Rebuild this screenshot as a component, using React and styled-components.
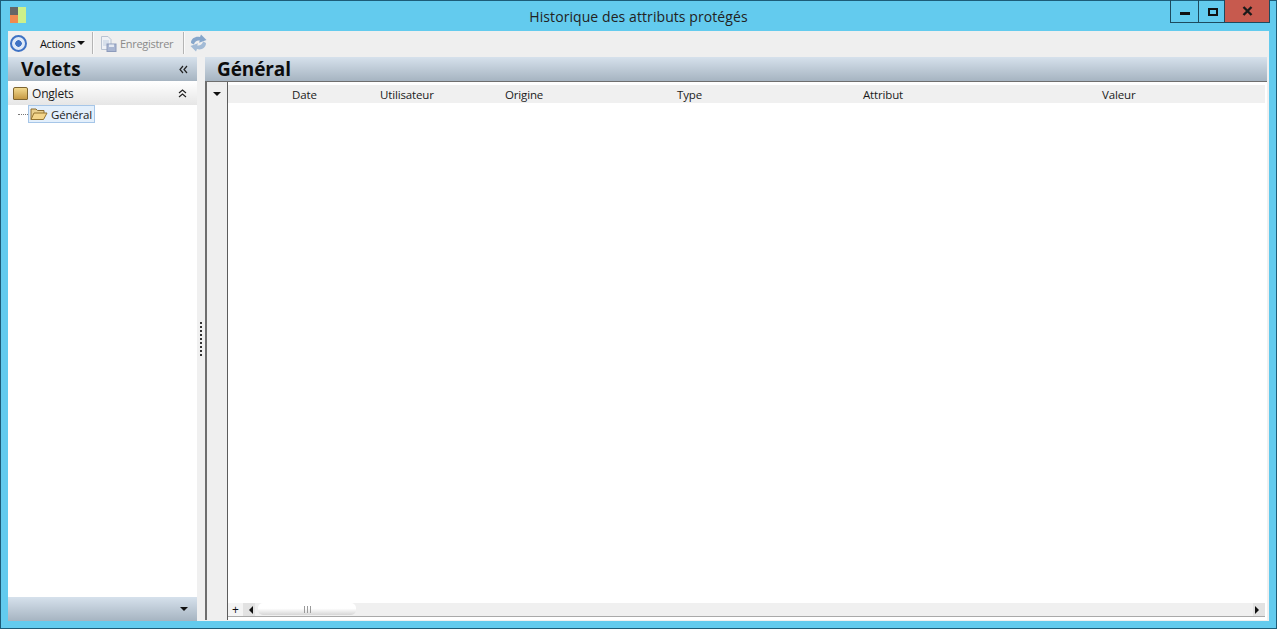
import React from "react";
import styled, { createGlobalStyle } from "styled-components";

const columns = [
  { label: "Date", width: 88 },
  { label: "Utilisateur", width: 125 },
  { label: "Origine", width: 172 },
  { label: "Type", width: 186 },
  { label: "Attribut", width: 239 },
  { label: "Valeur", width: 160 },
];

const App = () => {
  return (
    <>
      <GlobalStyle />
      <Window>
        <TitleBar>
          <AppLogo>
            <LogoCell color="#666666" />
            <LogoCell color="#cdf08a" tall />
            <LogoCell color="#f08a50" />
          </AppLogo>
          <WindowTitle>Historique des attributs protégés</WindowTitle>
          <WindowControls>
            <ControlButton $width={28}>
              <MinimizeGlyph />
            </ControlButton>
            <ControlButton $width={26}>
              <MaximizeGlyph />
            </ControlButton>
            <CloseButton>
              <svg width="11" height="10" viewBox="0 0 11 10">
                <path d="M1.5 1 L9.5 9 M9.5 1 L1.5 9" stroke="#1a1a1a" strokeWidth="2.4" />
              </svg>
            </CloseButton>
          </WindowControls>
        </TitleBar>
        <Client>
          <Toolbar>
            <TargetIcon />
            <ActionsMenu>
              Actions
              <Caret />
            </ActionsMenu>
            <ToolSeparator />
            <SaveButton>
              <svg width="17" height="17" viewBox="0 0 17 17">
                <path d="M1.5 1.5 H8 L11 4.5 V14.5 H1.5 Z" fill="#eef1f6" stroke="#b9c3d2" />
                <path d="M3 6 H9 M3 8 H9 M3 10 H7" stroke="#bfcde0" />
                <rect x="7" y="9" width="9" height="7.5" fill="#a9b6d2" stroke="#8d9bbb" />
                <rect x="9" y="9.5" width="5" height="2.5" fill="#e4e9f2" />
              </svg>
              Enregistrer
            </SaveButton>
            <ToolSeparator />
            <RefreshIcon>
              <svg width="17" height="18" viewBox="0 0 17 18">
                <path d="M1 9 C1 4 6 2 10 3 L11 0.5 L16.5 6 L9 8.8 L9.8 6.6 C7 6 5 7.5 3.8 10.5 Z" fill="#86a6cb" />
                <path d="M16 9 C16 14 11 16.5 7 15 L6 17.5 L0.5 12 L8 9.2 L7.2 11.4 C10 12 12 10.5 13.2 7.5 Z" fill="#a3bbd6" />
              </svg>
            </RefreshIcon>
          </Toolbar>
          <Body>
            <SidePanel>
              <PanelHeader>
                <PanelTitle>Volets</PanelTitle>
                <CollapseGlyph>
                  <svg width="9" height="9" viewBox="0 0 9 9" fill="none" stroke="#222" strokeWidth="1.2">
                    <path d="M4 1 L1 4.5 L4 8 M8 1 L5 4.5 L8 8" />
                  </svg>
                </CollapseGlyph>
              </PanelHeader>
              <GroupRow>
                <ClosedFolder />
                <GroupLabel>Onglets</GroupLabel>
                <GroupToggle>
                  <svg width="9" height="9" viewBox="0 0 9 9" fill="none" stroke="#222" strokeWidth="1.2">
                    <path d="M1 4 L4.5 1 L8 4 M1 8 L4.5 5 L8 8" />
                  </svg>
                </GroupToggle>
              </GroupRow>
              <TreeArea>
                <TreeRow>
                  <TreeDots />
                  <TreeItem>
                    <svg width="18" height="14" viewBox="0 0 18 14">
                      <path d="M1 12.5 V2 H6 L7.5 3.5 H14 V6" fill="#e9cf8d" stroke="#8a6d33" />
                      <path d="M1 12.5 L4 6 H17 L13.5 12.5 Z" fill="#f3d58a" stroke="#94742f" />
                    </svg>
                    <span>Général</span>
                  </TreeItem>
                </TreeRow>
              </TreeArea>
              <PanelFooter>
                <Caret />
              </PanelFooter>
            </SidePanel>
            <Splitter>
              <Grip />
            </Splitter>
            <MainPanel>
              <PanelHeader>
                <MainTitle>Général</MainTitle>
              </PanelHeader>
              <GridFrame>
                <RowHeaderStrip>
                  <StripTop>
                    <Caret />
                  </StripTop>
                </RowHeaderStrip>
                <GridContent>
                  <ColumnHeader>
                    {columns.map((col) => (
                      <ColumnLabel key={col.label} $width={col.width}>
                        {col.label}
                      </ColumnLabel>
                    ))}
                  </ColumnHeader>
                  <GridRows />
                  <ScrollRow>
                    <AddButton>+</AddButton>
                    <ScrollArrow $align="flex-end">
                      <ArrowLeft />
                    </ScrollArrow>
                    <ScrollTrack>
                      <ScrollThumb>
                        <ThumbGrip />
                      </ScrollThumb>
                    </ScrollTrack>
                    <ScrollArrow $align="flex-start">
                      <ArrowRight />
                    </ScrollArrow>
                  </ScrollRow>
                </GridContent>
              </GridFrame>
            </MainPanel>
          </Body>
        </Client>
      </Window>
    </>
  );
};

const GlobalStyle = createGlobalStyle`
  html, body {
    margin: 0;
    height: 100%;
    overflow: hidden;
  }
  body {
    font-family: "Open Sans", "Liberation Sans", sans-serif;
    color: #1b1b1b;
  }
`;

const Window = styled.div`
  box-sizing: border-box;
  width: 1277px;
  height: 629px;
  background: #63cbee;
  border: 1px solid #1d5c78;
  display: flex;
  flex-direction: column;
  padding: 0 7px 7px;
`;
const TitleBar = styled.div`
  height: 30px;
  flex: none;
  display: flex;
  align-items: flex-start;
  position: relative;
`;
const AppLogo = styled.div`
  display: grid;
  grid-template-columns: 8px 8px;
  grid-template-rows: 8px 8px;
  width: 16px;
  margin: 6px 0 0 2px;
`;
const LogoCell = styled.div`
  background: ${(props) => props.color};
  grid-row: ${(props) => (props.tall ? "1 / span 2" : "auto")};
  grid-column: ${(props) => (props.tall ? "2" : "1")};
`;
const WindowTitle = styled.div`
  position: absolute;
  left: 0;
  right: 0;
  top: 6px;
  text-align: center;
  font-size: 14px;
  line-height: 19px;
  letter-spacing: 0.08px;
  color: #222;
`;
const WindowControls = styled.div`
  position: absolute;
  right: -1px;
  top: -1px;
  display: flex;
  height: 22px;
  border: 1px solid #1d4a5e;
  border-top: none;
`;
const ControlButton = styled.div`
  box-sizing: border-box;
  width: ${(props) => props.$width}px;
  border-right: 1px solid #1d4a5e;
  display: flex;
  align-items: center;
  justify-content: center;
`;
const CloseButton = styled.div`
  width: 44px;
  background: #c75a4e;
  display: flex;
  align-items: center;
  justify-content: center;
`;
const MinimizeGlyph = styled.div`
  width: 10px;
  height: 3px;
  background: #111;
  margin-top: 5px;
`;
const MaximizeGlyph = styled.div`
  box-sizing: border-box;
  width: 10px;
  height: 8px;
  border: 2px solid #111;
  margin: 1px 0 0 2px;
`;
const Client = styled.div`
  flex: 1;
  min-height: 0;
  display: flex;
  flex-direction: column;
  background: #f0f0f0;
`;
const Toolbar = styled.div`
  box-sizing: border-box;
  height: 26px;
  flex: none;
  display: flex;
  align-items: center;
  padding-bottom: 2px;
  background: #efefef;
  font-size: 11px;
`;
const TargetIcon = styled.div`
  box-sizing: border-box;
  width: 17px;
  height: 17px;
  margin-left: 2px;
  border-radius: 50%;
  border: 2px solid #3f72c4;
  background: radial-gradient(circle, #3f72c4 0 3px, #dfe9f7 3.5px);
`;
const ActionsMenu = styled.div`
  display: flex;
  align-items: center;
  gap: 2px;
  margin-left: 13px;
  width: 49px;
  flex: none;
  letter-spacing: -0.35px;
  color: #111;
`;
const Caret = styled.div`
  width: 0;
  height: 0;
  border-left: 4px solid transparent;
  border-right: 4px solid transparent;
  border-top: 4px solid #111;
`;
const ToolSeparator = styled.div`
  width: 1px;
  height: 22px;
  margin-left: 3px;
  background: #b4b4b4;
  box-shadow: 1px 0 0 #fafafa;
`;
const SaveButton = styled.div`
  display: flex;
  align-items: center;
  gap: 3px;
  width: 80px;
  flex: none;
  margin-left: 7px;
  color: #8a8a8a;
  letter-spacing: -0.3px;
`;
const RefreshIcon = styled.div`
  display: flex;
  margin-left: 6px;
`;
const Body = styled.div`
  flex: 1;
  min-height: 0;
  display: flex;
`;
const SidePanel = styled.div`
  width: 189px;
  flex: none;
  display: flex;
  flex-direction: column;
  background: #fff;
`;
const PanelHeader = styled.div`
  height: 24px;
  flex: none;
  display: flex;
  align-items: center;
  justify-content: space-between;
  background: linear-gradient(#d6e1ec, #a6b4c1);
`;
const PanelTitle = styled.div`
  margin-left: 13px;
  font-size: 19px;
  font-weight: 700;
  letter-spacing: 0.15px;
  color: #0c0c0c;
`;
const MainTitle = styled(PanelTitle)`
  margin-left: 12px;
  letter-spacing: -0.1px;
`;
const CollapseGlyph = styled.div`
  display: flex;
  margin-right: 9px;
`;
const GroupRow = styled.div`
  height: 24px;
  flex: none;
  display: flex;
  align-items: center;
  background: linear-gradient(#ffffff, #e6e6e6);
  font-size: 12px;
`;
const ClosedFolder = styled.div`
  width: 13px;
  height: 11px;
  margin-left: 5px;
  border: 1px solid #7d6430;
  border-radius: 2px 2px 1px 1px;
  background: linear-gradient(#f2d98e, #c69a45);
`;
const GroupLabel = styled.div`
  margin-left: 4px;
  flex: 1;
  letter-spacing: -0.2px;
`;
const GroupToggle = styled.div`
  display: flex;
  margin-right: 10px;
`;
const TreeArea = styled.div`
  flex: 1;
  min-height: 0;
`;
const TreeRow = styled.div`
  display: flex;
  align-items: center;
  height: 18px;
`;
const TreeDots = styled.div`
  width: 10px;
  margin-left: 10px;
  border-top: 1px dotted #777;
`;
const TreeItem = styled.div`
  box-sizing: border-box;
  height: 18px;
  width: 67px;
  display: flex;
  align-items: center;
  gap: 3px;
  padding-left: 1px;
  background: #e3effb;
  border: 1px solid #a6c6e8;
  font-size: 11.5px;
  letter-spacing: -0.2px;
`;
const PanelFooter = styled.div`
  height: 24px;
  flex: none;
  display: flex;
  align-items: center;
  justify-content: flex-end;
  padding-right: 9px;
  background: linear-gradient(#d6e1ec, #a6b4c1);
`;
const Splitter = styled.div`
  width: 8px;
  flex: none;
  display: flex;
  align-items: center;
  justify-content: center;
  background: #f0f0f0;
`;
const Grip = styled.div`
  width: 0;
  height: 34px;
  border-left: 2px dotted #333;
`;
const MainPanel = styled.div`
  flex: 1;
  min-width: 0;
  display: flex;
  flex-direction: column;
  margin-right: 2px;
`;
const GridFrame = styled.div`
  flex: 1;
  min-height: 0;
  display: flex;
  box-sizing: border-box;
  background: #fff;
  border-left: 2px solid #6e6e6e;
  border-top: 1px solid #6e6e6e;
  margin-bottom: 1px;
  padding-top: 3px;
`;
const RowHeaderStrip = styled.div`
  width: 20px;
  flex: none;
  background: #efefef;
  border-right: 1px solid #5c5c5c;
  margin-top: -3px;
`;
const StripTop = styled.div`
  display: flex;
  justify-content: center;
  padding: 10px 1px 0 0;
`;
const GridContent = styled.div`
  flex: 1;
  min-width: 0;
  display: flex;
  flex-direction: column;
  padding-right: 2px;
`;
const ColumnHeader = styled.div`
  height: 18px;
  flex: none;
  display: flex;
  align-items: center;
  background: #f0f0f0;
  font-size: 11.5px;
  letter-spacing: -0.15px;
  padding-left: 64px;
`;
const ColumnLabel = styled.div`
  width: ${(props) => props.$width}px;
  flex: none;
  white-space: nowrap;
`;
const GridRows = styled.div`
  flex: 1;
  min-height: 0;
`;
const ScrollRow = styled.div`
  height: 13px;
  flex: none;
  display: flex;
  align-items: stretch;
  background: #f0f0f0;
  border-bottom: 1px solid #a9a9a9;
  margin-bottom: 3px;
`;
const AddButton = styled.div`
  width: 15px;
  text-align: center;
  font-size: 12px;
  line-height: 13px;
  color: #111;
  background: #f4f4f4;
`;
const ScrollArrow = styled.div`
  box-sizing: border-box;
  width: 12px;
  flex: none;
  display: flex;
  align-items: center;
  justify-content: ${(props) => props.$align};
  padding: 0 2px;
  background: #e2e2e2;
`;
const ArrowLeft = styled.div`
  width: 0;
  height: 0;
  border-top: 4px solid transparent;
  border-bottom: 4px solid transparent;
  border-right: 4px solid #111;
`;
const ArrowRight = styled.div`
  width: 0;
  height: 0;
  border-top: 4px solid transparent;
  border-bottom: 4px solid transparent;
  border-left: 4px solid #111;
`;
const ScrollTrack = styled.div`
  flex: 1;
  min-width: 0;
  padding-left: 3px;
`;
const ScrollThumb = styled.div`
  box-sizing: border-box;
  width: 98px;
  height: 12px;
  border-radius: 5px;
  background: linear-gradient(#ffffff 45%, #d6d6d6);
  display: flex;
  align-items: center;
  justify-content: center;
`;
const ThumbGrip = styled.div`
  width: 7px;
  height: 7px;
  background: repeating-linear-gradient(90deg, #9a9a9a 0 1px, transparent 1px 3px);
`;

export default App;
